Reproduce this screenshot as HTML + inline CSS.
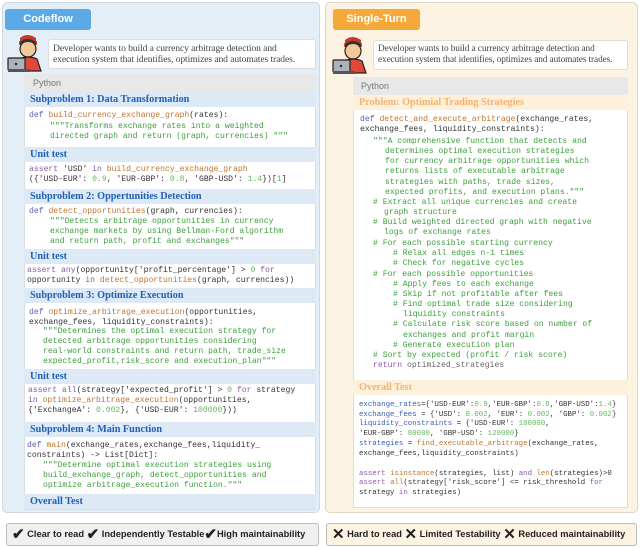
<!DOCTYPE html>
<html><head><meta charset="utf-8"><style>
*{margin:0;padding:0;box-sizing:border-box}
body{width:640px;height:547px;background:#fff;position:relative;overflow:hidden;font-family:"Liberation Sans",sans-serif}
.abs{position:absolute}
.l{position:absolute;font-family:"Liberation Mono",monospace;font-size:8.1px;line-height:10px;height:10px;white-space:pre;color:#333}
.o{font-size:7.4px}
.k{color:#5a5db0}.f{color:#c0742e}.g{color:#3c9f3c}.p{color:#8b5aa8}.n{color:#5fb85a}.b{color:#3a5fb0}
.h{position:absolute;font-family:"Liberation Serif",serif;font-weight:bold;font-size:10.2px;line-height:15px;color:#1f5fb8;padding-left:6px}
.ho{color:#f4b470}
.desc{position:absolute;background:#fff;border:1px solid #ddd;border-radius:3px;font-family:"Liberation Serif",serif;font-size:9.6px;line-height:11px;color:#444;padding:3px 4px;white-space:nowrap;letter-spacing:-0.1px}
.badge{position:absolute;top:523px;height:23px;border:1px solid #bbb;border-radius:3px;font-weight:bold;font-size:9.3px;line-height:21px;color:#222;white-space:nowrap;padding-left:5px;overflow:hidden}
.badge span{font-size:15px;vertical-align:-2px}
</style></head><body>
<div class="abs" style="left:2px;top:2px;width:318px;height:511px;background:#e4eef7;border:1px solid #cfd8e0;border-radius:5px"></div>
<div class="abs" style="left:5px;top:9px;width:86px;height:21px;background:#5ba9e5;border-radius:3px;color:#fff;font-weight:bold;font-size:11px;line-height:21px;text-align:center">Codeflow</div>
<svg class="abs" style="left:6px;top:33px" width="38" height="40" viewBox="0 0 38 40">
<path d="M14 5 Q21 -1 30 5 L30 12 L14 12Z" fill="#c53a2a"/>
<rect x="13" y="8" width="18" height="4" fill="#e14b3a"/>
<ellipse cx="22" cy="16" rx="8" ry="8" fill="#f4c99a" stroke="#222" stroke-width="1.2"/>
<path d="M14 12 Q22 6 30 12 L30 9 Q22 3 14 9Z" fill="#333"/>
<path d="M13 26 Q22 22 31 26 L35 38 L11 38Z" fill="#e2483a" stroke="#222" stroke-width="1.2"/>
<rect x="2" y="25" width="17" height="12" rx="1" fill="#aab2bb" stroke="#222" stroke-width="1.2"/>
<circle cx="10" cy="31" r="1.2" fill="#222"/>
<rect x="2" y="36" width="22" height="3" fill="#555"/>
</svg>
<div class="desc" style="left:48px;top:39px;width:268px;height:30px">Developer wants to build a currency arbitrage detection and<br>execution system that identifies, optimizes and automates trades.</div>
<div class="abs" style="left:24px;top:74px;width:292px;height:436px;background:#fff;border:1px solid #ddd"></div>
<div class="abs" style="left:24px;top:74px;width:292px;height:18px;background:#e8e8e8;color:#777;font-size:9px;line-height:18px;padding-left:9px">Python</div>
<div class="h" style="left:24px;top:92px;width:292px;background:#dde9f5">Subproblem 1: Data Transformation</div>
<div class="l" style="left:29px;top:111px"><span class="k">def</span> <span class="f">build_currency_exchange_graph</span>(rates):</div>
<div class="l g" style="left:50px;top:122px">"""Transforms exchange rates into a weighted</div>
<div class="l g" style="left:50px;top:132px">directed graph and return (graph, currencies) """</div>
<div class="h" style="left:24px;top:147px;width:292px;background:#dde9f5">Unit test</div>
<div class="l" style="left:29px;top:165px"><span class="p">assert</span> 'USD' <span class="p">in</span> <span class="f">build_currency_exchange_graph</span></div>
<div class="l" style="left:29px;top:175px">({'USD-EUR': <span class="n">0.9</span>, 'EUR-GBP': <span class="n">0.8</span>, 'GBP-USD': <span class="n">1.4</span>})[<span class="n">1</span>]</div>
<div class="h" style="left:24px;top:189px;width:292px;background:#dde9f5">Subproblem 2: Oppertunities Detection</div>
<div class="l" style="left:29px;top:207px"><span class="k">def</span> <span class="f">detect_opportunities</span>(graph, currencies):</div>
<div class="l g" style="left:50px;top:217px">"""Detects arbitrage opportunities in currency</div>
<div class="l g" style="left:50px;top:227px">exchange markets by using Bellman-Ford algorithm</div>
<div class="l g" style="left:50px;top:237px">and return path, profit and exchanges"""</div>
<div class="h" style="left:24px;top:249px;width:292px;background:#dde9f5">Unit test</div>
<div class="l" style="left:27px;top:266px"><span class="p">assert</span> <span class="p">any</span>(opportunity['profit_percentage'] &gt; <span class="n">0</span> <span class="p">for</span></div>
<div class="l" style="left:27px;top:276px">opportunity <span class="p">in</span> <span class="f">detect_opportunities</span>(graph, currencies))</div>
<div class="h" style="left:24px;top:288px;width:292px;background:#dde9f5">Subproblem 3: Optimize Execution</div>
<div class="l" style="left:29px;top:308px"><span class="k">def</span> <span class="f">optimize_arbitrage_execution</span>(opportunities,</div>
<div class="l" style="left:29px;top:318px">exchange_fees, liquidity_constraints):</div>
<div class="l g" style="left:43px;top:327px">"""Determines the optimal execution strategy for</div>
<div class="l g" style="left:43px;top:337px">detected arbitrage opportunities considering</div>
<div class="l g" style="left:43px;top:347px">real-world constraints and return path, trade_size</div>
<div class="l g" style="left:43px;top:357px">expected_profit,risk_score and execution_plan"""</div>
<div class="h" style="left:24px;top:369px;width:292px;background:#dde9f5">Unit test</div>
<div class="l" style="left:28px;top:386px"><span class="p">assert</span> <span class="p">all</span>(strategy['expected_profit'] &gt; <span class="n">0</span> <span class="p">for</span> strategy</div>
<div class="l" style="left:28px;top:396px"><span class="p">in</span> <span class="f">optimize_arbitrage_execution</span>(opportunities,</div>
<div class="l" style="left:28px;top:406px">{'ExchangeA': <span class="n">0.002</span>}, {'USD-EUR': <span class="n">100000</span>}))</div>
<div class="h" style="left:24px;top:422px;width:292px;background:#dde9f5">Subproblem 4: Main Function</div>
<div class="l" style="left:27px;top:441px"><span class="k">def</span> <span class="f">main</span>(exchange_rates,exchange_fees,liquidity_</div>
<div class="l" style="left:27px;top:451px">constraints) -&gt; List[Dict]:</div>
<div class="l g" style="left:43px;top:461px">"""Determine optimal execution strategies using</div>
<div class="l g" style="left:43px;top:471px">build_exchange_graph, detect_opportunities and</div>
<div class="l g" style="left:43px;top:481px">optimize arbitrage_execution function."""</div>
<div class="h" style="left:24px;top:494px;width:292px;height:15px;background:#dde9f5">Overall Test</div>

<div class="abs" style="left:325px;top:2px;width:313px;height:511px;background:#fdf3e2;border:1px solid #e0d6c6;border-radius:5px"></div>
<div class="abs" style="left:333px;top:9px;width:87px;height:21px;background:#f4a93a;border-radius:3px;color:#fff;font-weight:bold;font-size:11px;line-height:21px;text-align:center">Single-Turn</div>
<svg class="abs" style="left:331px;top:35px" width="38" height="40" viewBox="0 0 38 40">
<path d="M14 5 Q21 -1 30 5 L30 12 L14 12Z" fill="#c53a2a"/>
<rect x="13" y="8" width="18" height="4" fill="#e14b3a"/>
<ellipse cx="22" cy="16" rx="8" ry="8" fill="#f4c99a" stroke="#222" stroke-width="1.2"/>
<path d="M14 12 Q22 6 30 12 L30 9 Q22 3 14 9Z" fill="#333"/>
<path d="M13 26 Q22 22 31 26 L35 38 L11 38Z" fill="#e2483a" stroke="#222" stroke-width="1.2"/>
<rect x="2" y="25" width="17" height="12" rx="1" fill="#aab2bb" stroke="#222" stroke-width="1.2"/>
<circle cx="10" cy="31" r="1.2" fill="#222"/>
<rect x="2" y="36" width="22" height="3" fill="#555"/>
</svg>
<div class="desc" style="left:373px;top:40px;width:255px;height:30px;font-size:9.3px">Developer wants to build a currency arbitrage detection and<br>execution system that identifies, optimizes and automates trades.</div>
<div class="abs" style="left:353px;top:77px;width:275px;height:431px;background:#fff;border:1px solid #ddd"></div>
<div class="abs" style="left:353px;top:77px;width:275px;height:18px;background:#e8e8e8;color:#777;font-size:9px;line-height:18px;padding-left:8px">Python</div>
<div class="h ho" style="left:353px;top:95px;width:275px;background:#fdf0dc">Problem: Optimial Trading Strategies</div>
<div class="l" style="left:360px;top:115px"><span class="k">def</span> <span class="f">detect_and_execute_arbitrage</span>(exchange_rates,</div>
<div class="l" style="left:360px;top:125px">exchange_fees, liquidity_constraints):</div>
<div class="l g" style="left:373px;top:137px">"""A comprehensive function that detects and</div>
<div class="l g" style="left:385px;top:147px">determines optimal execution strategies</div>
<div class="l g" style="left:385px;top:157px">for currency arbitrage opportunities which</div>
<div class="l g" style="left:385px;top:167px">returns lists of executable arbitrage</div>
<div class="l g" style="left:385px;top:178px">strategies with paths, trade sizes,</div>
<div class="l g" style="left:385px;top:188px">expected profits, and execution plans."""</div>
<div class="l g" style="left:373px;top:198px"># Extract all unique currencies and create</div>
<div class="l g" style="left:384px;top:208px">graph structure</div>
<div class="l g" style="left:373px;top:218px"># Build weighted directed graph with negative</div>
<div class="l g" style="left:384px;top:228px">logs of exchange rates</div>
<div class="l g" style="left:373px;top:239px"># For each possible starting currency</div>
<div class="l g" style="left:393px;top:249px"># Relax all edges n-1 times</div>
<div class="l g" style="left:393px;top:259px"># Check for negative cycles</div>
<div class="l g" style="left:373px;top:270px"># For each possible opportunities</div>
<div class="l g" style="left:393px;top:280px"># Apply fees to each exchange</div>
<div class="l g" style="left:393px;top:290px"># Skip if not profitable after fees</div>
<div class="l g" style="left:393px;top:300px"># Find optimal trade size considering</div>
<div class="l g" style="left:403px;top:310px">liquidity constraints</div>
<div class="l g" style="left:393px;top:320px"># Calculate risk score based on number of</div>
<div class="l g" style="left:403px;top:331px">exchanges and profit margin</div>
<div class="l g" style="left:393px;top:341px"># Generate execution plan</div>
<div class="l g" style="left:373px;top:351px"># Sort by expected (profit / risk score)</div>
<div class="l" style="left:373px;top:361px;color:#666"><span class="p">return</span> optimized_strategies</div>
<div class="h ho" style="left:353px;top:380px;width:275px;background:#fdf0dc">Overall Test</div>
<div class="l o" style="left:359px;top:400px"><span class="b">exchange_rates</span>={'USD-EUR':<span class="n">0.9</span>,'EUR-GBP':<span class="n">0.8</span>,'GBP-USD':<span class="n">1.4</span>}</div>
<div class="l o" style="left:359px;top:410px"><span class="b">exchange_fees</span> = {'USD': <span class="n">0.002</span>, 'EUR': <span class="n">0.002</span>, 'GBP': <span class="n">0.002</span>}</div>
<div class="l o" style="left:359px;top:419px"><span class="b">liquidity_constraints</span> = {'USD-EUR': <span class="n">100000</span>,</div>
<div class="l o" style="left:359px;top:429px">'EUR-GBP': <span class="n">80000</span>, 'GBP-USD': <span class="n">120000</span>}</div>
<div class="l o" style="left:359px;top:439px"><span class="b">strategies</span> = <span class="f">find_executable_arbitrage</span>(exchange_rates,</div>
<div class="l o" style="left:359px;top:449px">exchange_fees,liquidity_constraints)</div>
<div class="l o" style="left:359px;top:469px"><span class="p">assert</span> <span class="f">isinstance</span>(strategies, list) <span class="p">and</span> <span class="f">len</span>(strategies)&gt;0</div>
<div class="l o" style="left:359px;top:478px"><span class="p">assert</span> <span class="f">all</span>(strategy['risk_score'] &lt;= risk_threshold <span class="p">for</span></div>
<div class="l o" style="left:359px;top:488px">strategy <span class="p">in</span> strategies)</div>

<div class="badge" style="left:6px;width:313px;background:#f0f0f0"><span>✔</span> Clear to read <span>✔</span> Independently Testable<span>✔</span>High maintainability</div>
<div class="badge" style="left:326px;width:311px;background:#fdf3e2"><span>✕</span> Hard to read <span>✕</span> Limited Testability <span>✕</span> Reduced maintainability</div>
</body></html>
